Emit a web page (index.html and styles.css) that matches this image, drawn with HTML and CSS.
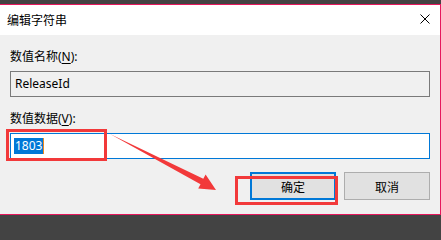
FILE: index.html
```html
<!DOCTYPE html>
<html lang="zh-CN">
<head>
<meta charset="utf-8">
<title>编辑字符串</title>
<link rel="stylesheet" href="styles.css">
</head>
<body>
<div class="screen">
  <div class="window">
    <div class="titlebar">
      <span class="title">编辑字符串</span>
      <svg class="close" width="10" height="10" viewBox="0 0 10 10"><path d="M0.5 0.5 L9.5 9.5 M9.5 0.5 L0.5 9.5" stroke="#000" stroke-width="1" fill="none"/></svg>
    </div>
    <div class="content">
      <div class="label">数值名称(<u>N</u>):</div>
      <div class="field field-readonly">ReleaseId</div>
      <div class="label label-second">数值数据(<u>V</u>):</div>
      <div class="field field-active"><span class="selection">1803</span><span class="caret"></span></div>
      <div class="buttons">
        <div class="btn btn-default">确定</div>
        <div class="btn">取消</div>
      </div>
    </div>
  </div>
  <div class="mark mark-value"></div>
  <div class="mark mark-ok"></div>
  <svg class="arrow" width="441" height="218" viewBox="0 0 441 218"><polygon points="110,134 203.3,178.8 205.6,174.4 216,190 198.2,188.6 200.5,184.2" fill="#f2393a"/></svg>
</div>
</body>
</html>
```
FILE: styles.css
```css
html, body {
  margin: 0;
  padding: 0;
}
body {
  width: 441px;
  height: 218px;
  background: #434343;
  overflow: hidden;
  font-family: "Noto Sans", "Noto Sans CJK SC", sans-serif;
  font-size: 12px;
  color: #000;
}
.screen {
  position: relative;
  width: 441px;
  height: 218px;
  padding-top: 4px;
  box-sizing: border-box;
}
.window {
  width: 441px;
  height: 211px;
  box-sizing: border-box;
  border-top: 1px solid #e6175c;
  border-right: 1px solid #e6175c;
  border-bottom: 1px solid #e6175c;
  background: #f0f0f0;
  display: flex;
  flex-direction: column;
}
.titlebar {
  height: 30px;
  background: #fff;
  display: flex;
  align-items: center;
  padding: 0 10px 0 7px;
}
.title {
  font-family: "Noto Sans CJK SC", sans-serif;
  font-size: 12px;
  line-height: 16px;
}
.close {
  margin-left: auto;
  align-self: flex-start;
  margin-top: 9px;
  display: block;
}
.content {
  flex: 1;
  padding: 14px 10px 0 10px;
  display: flex;
  flex-direction: column;
}
.label {
  line-height: 16px;
  height: 16px;
}
.label u {
  text-decoration-thickness: 1px;
  text-underline-offset: 2px;
}
.label-second {
  margin-top: 14px;
}
.field {
  margin-top: 6px;
  height: 26px;
  box-sizing: border-box;
  display: flex;
  align-items: center;
  line-height: 16px;
}
.field-readonly {
  border: 1px solid #7a7a7a;
  background: #f0f0f0;
  padding-left: 4px;
}
.field-active {
  border: 1px solid #0078d7;
  background: #fff;
  padding-left: 3px;
}
.selection {
  background: #0078d7;
  color: #fff;
  padding: 0 1px;
  line-height: 16px;
  height: 16px;
}
.caret {
  width: 1px;
  height: 16px;
  background: #f08a1c;
}
.buttons {
  margin-top: 13px;
  display: flex;
  justify-content: flex-end;
  gap: 8px;
}
.btn {
  width: 86px;
  height: 28px;
  box-sizing: border-box;
  border: 1px solid #adadad;
  background: #e1e1e1;
  display: flex;
  align-items: center;
  justify-content: center;
  font-family: "Noto Sans CJK SC", sans-serif;
}
.btn-default {
  border: 2px solid #0078d7;
}
.mark {
  position: absolute;
  box-sizing: border-box;
  border: 3px solid #f2393a;
}
.mark-value {
  left: 6px;
  top: 129px;
  width: 101px;
  height: 32px;
}
.mark-ok {
  left: 235px;
  top: 176px;
  width: 103px;
  height: 29px;
}
.arrow {
  position: absolute;
  left: 0;
  top: 0;
  pointer-events: none;
}
```
